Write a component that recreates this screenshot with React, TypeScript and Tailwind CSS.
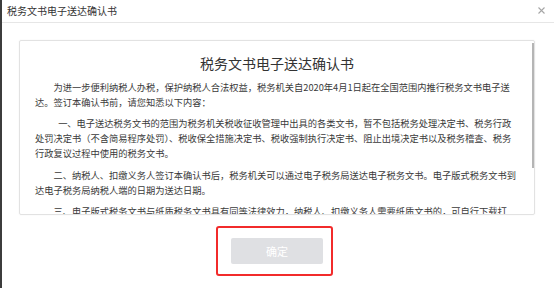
import React from 'react';

const paragraphs = [
  { text: '为进一步便利纳税人办税，保护纳税人合法权益，税务机关自2020年4月1日起在全国范围内推行税务文书电子送达。签订本确认书前，请您知悉以下内容：', indent: 'indent-[2em]' },
  { text: '一、电子送达税务文书的范围为税务机关税收征收管理中出具的各类文书，暂不包括税务处理决定书、税务行政处罚决定书（不含简易程序处罚）、税收保全措施决定书、税收强制执行决定书、阻止出境决定书以及税务稽查、税务行政复议过程中使用的税务文书。', indent: 'indent-[2.5em]' },
  { text: '二、纳税人、扣缴义务人签订本确认书后，税务机关可以通过电子税务局送达电子税务文书。电子版式税务文书到达电子税务局纳税人端的日期为送达日期。', indent: 'indent-[2em]' },
  { text: '三、电子版式税务文书与纸质税务文书具有同等法律效力，纳税人、扣缴义务人需要纸质文书的，可自行下载打印，也可到办税服务厅打印。', indent: 'indent-[2em]' },
];

export default function App() {
  return (
    <div
      className="relative w-[554px] h-[288px] overflow-hidden bg-white border-l-2 border-[#3c3c3c] text-[#333]"
      style={{ fontFamily: '"Noto Sans CJK SC", "Noto Sans", sans-serif' }}
    >
      {/* 弹窗头部 */}
      <div className="h-[23px] flex items-center justify-between border-b border-[#e6e6e6] pl-[5px] pr-[9px]">
        <span className="text-[10px] leading-none">税务文书电子送达确认书</span>
        <svg width="7" height="7" viewBox="0 0 7 7" className="mt-[-1px]">
          <path d="M0.5 0.5 L6.5 6.5 M6.5 0.5 L0.5 6.5" stroke="#a6a6a6" strokeWidth="1.1" />
        </svg>
      </div>

      {/* 确认书内容 */}
      <div className="ml-[17px] mt-[17px] w-[516px] h-[175px] relative overflow-hidden border border-[#e2e2e2] rounded-[2px] shadow-[0_0_2px_rgba(0,0,0,0.06)]">
        <h1 className="pt-[12px] text-center text-[14px] leading-[20px] font-normal text-[#333] mb-[6.5px]">
          税务文书电子送达确认书
        </h1>
        <div className="pl-[15px] w-[497px]">
          {paragraphs.map((p, i) => (
            <p key={i} className={`text-[9.25px] leading-[15px] mb-[6.5px] text-[#3a3a3a] ${p.indent}`}>
              {p.text}
            </p>
          ))}
        </div>
        <div className="absolute right-0 top-[2px] w-[2px] h-[125px] bg-[#b5b5b5]" />
      </div>

      {/* 底部按钮 */}
      <div className="flex justify-center pr-[2px] mt-[22px]">
        <div className="relative">
          <button className="w-[92px] h-[26px] bg-[#dfe0e3] text-white text-[11px] rounded-[2px]">确定</button>
          <div className="absolute left-[-15px] top-[-11px] w-[117px] h-[50px] border-2 border-[#f22b2b] rounded-[3px]" />
        </div>
      </div>
    </div>
  );
}
